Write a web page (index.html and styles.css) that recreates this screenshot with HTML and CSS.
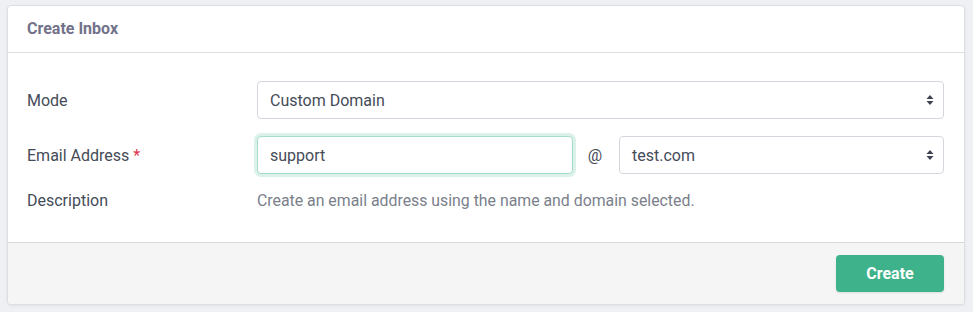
FILE: index.html
```html
<!DOCTYPE html>
<html>
<head>
<meta charset="utf-8">
<link rel="stylesheet" href="styles.css">
</head>
<body>
<div class="card">
  <div class="card-header">Create Inbox</div>
  <div class="card-body">
    <div class="row">
      <div class="label">Mode</div>
      <div class="control">
        <div class="select full">
          <span>Custom Domain</span>
          <svg class="arrows" width="8" height="12" viewBox="0 0 8 12"><path d="M4 1 L7.5 5 H0.5 Z M4 11 L7.5 7 H0.5 Z" fill="#3d4350"/></svg>
        </div>
      </div>
    </div>
    <div class="row">
      <div class="label">Email Address <span class="req">*</span></div>
      <div class="control email">
        <div class="input focus">support</div>
        <div class="at">@</div>
        <div class="select">
          <span>test.com</span>
          <svg class="arrows" width="8" height="12" viewBox="0 0 8 12"><path d="M4 1 L7.5 5 H0.5 Z M4 11 L7.5 7 H0.5 Z" fill="#3d4350"/></svg>
        </div>
      </div>
    </div>
    <div class="row desc-row">
      <div class="label">Description</div>
      <div class="desc">Create an email address using the name and domain selected.</div>
    </div>
  </div>
  <div class="card-footer">
    <button class="btn">Create</button>
  </div>
</div>
</body>
</html>
```
FILE: styles.css
```css
html, body {
  margin: 0;
  padding: 0;
}
body {
  background: #eef0f4;
  font-family: Roboto, "Noto Sans", sans-serif;
  padding: 5px 8px 7px 7px;
}
.card {
  background: #fff;
  border: 1px solid #dcdee3;
  border-radius: 4px;
  box-shadow: 0 1px 3px rgba(0,0,0,0.06);
  width: 956px;
  height: 298px;
  display: flex;
  flex-direction: column;
  overflow: hidden;
}
.card-header {
  height: 47px;
  border-bottom: 1px solid #dcdee3;
  box-sizing: border-box;
  padding: 13px 19px 0;
  font-weight: 700;
  font-size: 16px;
  color: #72728a;
  flex: none;
}
.card-body {
  padding: 28px 20px 0 19px;
  flex: 1;
}
.row {
  display: flex;
  align-items: center;
  margin-bottom: 17px;
}
.label {
  width: 230px;
  flex: none;
  font-size: 16px;
  color: #454b58;
}
.req {
  color: #e0344a;
}
.control {
  flex: 1;
  display: flex;
  align-items: center;
}
.select, .input {
  height: 38px;
  box-sizing: border-box;
  border: 1px solid #d3d6dc;
  border-radius: 4px;
  background: #fff;
  display: flex;
  align-items: center;
  padding: 0 12px;
  font-size: 16px;
  color: #454b58;
}
.select {
  justify-content: space-between;
  padding-right: 9px;
}
.full {
  flex: 1;
}
.email .input {
  width: 316px;
  flex: none;
}
.input.focus {
  border-color: #a6dcc5;
  box-shadow: 0 0 0 3px rgba(62, 179, 138, 0.18);
}
.at {
  width: 46px;
  flex: none;
  text-align: center;
  font-size: 16px;
  color: #454b58;
  padding-right: 2px;
  box-sizing: border-box;
}
.email .select {
  flex: 1;
}
.desc-row {
  margin-top: 6px;
  margin-bottom: 0;
}
.desc {
  font-size: 15.85px;
  color: #7a7f8b;
}
.card-footer {
  height: 62px;
  box-sizing: border-box;
  border-top: 1px solid #d9d9d9;
  background: #f5f5f5;
  display: flex;
  justify-content: flex-end;
  align-items: flex-start;
  padding: 12px 20px 0 0;
  flex: none;
}
.btn {
  width: 108px;
  height: 37px;
  border: none;
  border-radius: 4px;
  background: #3eb38b;
  color: #fff;
  font-family: Roboto, "Noto Sans", sans-serif;
  font-weight: 700;
  font-size: 16px;
  box-shadow: 0 1px 2px rgba(0,0,0,0.1);
}
```
